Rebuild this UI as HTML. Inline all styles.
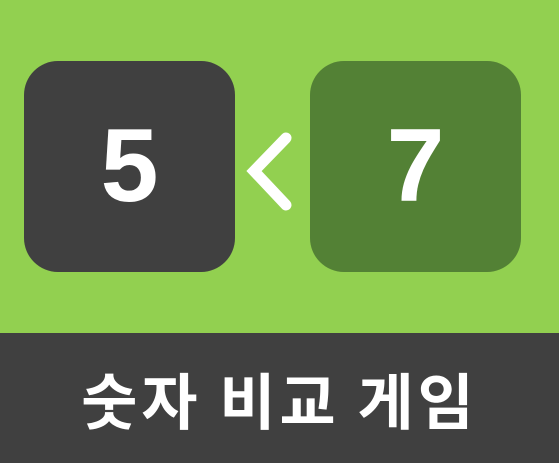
<!DOCTYPE html>
<html><head><meta charset="utf-8"><style>
body{margin:0;width:559px;height:473px;background:#fff;overflow:hidden;position:relative;font-family:"Liberation Sans","Noto Sans CJK KR",sans-serif}
.top{position:absolute;left:0;top:0;width:559px;height:333px;background:#92d050}
.bar{position:absolute;left:0;top:333px;width:559px;height:130px;background:#404040;color:#fff;font-weight:bold;font-size:61px;text-align:center;line-height:130px;letter-spacing:4px;font-family:"Noto Sans CJK KR",sans-serif}
.box{position:absolute;top:61px;width:211px;height:211px;border-radius:34px;color:#fff;font-weight:bold;font-size:104px;text-align:center;line-height:211px}
</style></head><body>
<div class="top"></div>
<div class="box" style="left:24px;background:#404040">5</div>
<div class="box" style="left:310px;background:#538135">7</div>
<svg style="position:absolute;left:0;top:0" width="559" height="333"><path d="M286 138 L254 171 L286 205" fill="none" stroke="#fff" stroke-width="11" stroke-linecap="round" stroke-linejoin="miter"/></svg>
<div class="bar">숫자 비교 게임</div>
</body></html>
